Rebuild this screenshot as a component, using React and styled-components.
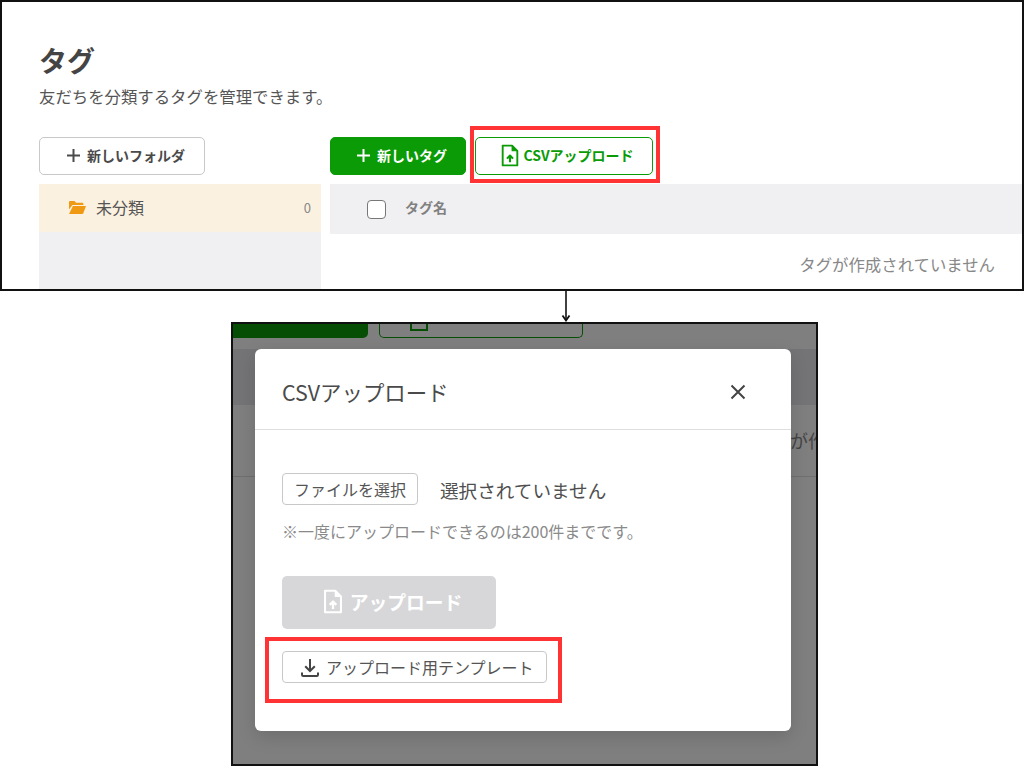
import React from 'react'
import styled, { createGlobalStyle } from 'styled-components'

const GlobalStyle = createGlobalStyle`
  html, body {
    margin: 0;
    padding: 0;
    background: #fff;
  }
  body {
    font-family: "Noto Sans CJK JP", "Noto Sans", sans-serif;
    color: #4a4a4a;
  }
  * {
    box-sizing: border-box;
  }
`

const Page = styled.div`
  width: 1024px;
  height: 768px;
  overflow: hidden;
  display: flex;
  flex-direction: column;
  align-items: flex-start;
`

const TopShot = styled.section`
  position: relative;
  width: 1024px;
  height: 291px;
  flex: none;
  border: 2px solid #111;
  overflow: hidden;
  padding: 40px 0 0 37px;
`

const Title = styled.h1`
  margin: 0;
  font-size: 28px;
  line-height: 36px;
  font-weight: 700;
  color: #444;
`

const Lead = styled.p`
  margin: 6px 0 0;
  font-size: 16.4px;
  line-height: 24px;
  color: #555;
`

const Columns = styled.div`
  margin-top: 29px;
  display: grid;
  grid-template-columns: 282px 692px;
  column-gap: 9px;
`

const Side = styled.div`
  display: flex;
  flex-direction: column;
  gap: 9px;
`

const Main = styled.div`
  display: flex;
  flex-direction: column;
  gap: 9px;
`

const Actions = styled.div`
  display: flex;
  gap: 9px;
`

const Button = styled.button`
  height: 38px;
  width: ${p => p.$w}px;
  padding: 0 0 2px 7px;
  display: flex;
  align-items: center;
  justify-content: center;
  gap: ${p => p.$gap || 6}px;
  border-radius: 5px;
  border: 1px solid ${p => (p.$variant === 'plain' ? '#c8c8c8' : '#0a9b06')};
  background: ${p => (p.$variant === 'solid' ? '#0a9b06' : '#fff')};
  color: ${p => (p.$variant === 'solid' ? '#fff' : p.$variant === 'plain' ? '#4a4a4a' : '#0a9b06')};
  font-family: inherit;
  font-size: 14px;
  font-weight: 700;
`

const FolderList = styled.div`
  height: 106px;
  background: #f0f0f2;
`

const FolderRow = styled.div`
  height: 48px;
  background: #fbf1e0;
  display: flex;
  align-items: center;
  padding: 0 10px 2px 30px;
  font-size: 16px;
  color: #555;
`

const FolderName = styled.span`
  margin-left: 10px;
  flex: 1;
`

const Count = styled.span`
  font-size: 13px;
  color: #888;
`

const TableHead = styled.div`
  height: 50px;
  background: #f0f0f2;
  display: flex;
  align-items: center;
  padding-left: 37px;
  gap: 19px;
  font-size: 14px;
  font-weight: 700;
  color: #808080;
`

const Check = styled.span`
  width: 19px;
  height: 19px;
  border: 1px solid #777;
  border-radius: 4px;
  background: #fff;
`

const HeadLabel = styled.span`
  margin-bottom: 5px;
`

const Empty = styled.div`
  height: 60px;
  padding: 9px 27px 0 0;
  text-align: right;
  font-size: 16.4px;
  line-height: 24px;
  color: #888;
`

const Highlight = styled.div`
  position: absolute;
  border: 4px solid #ff3334;
  left: ${p => p.$x}px;
  top: ${p => p.$y}px;
  width: ${p => p.$w}px;
  height: ${p => p.$h}px;
`

const Connector = styled.div`
  flex: none;
  width: 12px;
  height: 31px;
  margin-left: 560px;
  display: flex;
  justify-content: center;
`

const BottomShot = styled.section`
  position: relative;
  flex: none;
  width: 587px;
  height: 444px;
  margin-left: 231px;
  border: 2px solid #111;
  overflow: hidden;
  background: #7f7f7f;
`

const BackTop = styled.div`
  display: flex;
  gap: 11px;
  height: 14px;
`

const BackSolid = styled.div`
  width: 135px;
  background: #054e03;
  border-radius: 0 0 5px 0;
`

const BackOutline = styled.div`
  width: 204px;
  border: 1px solid #054e03;
  border-top: 0;
  border-radius: 0 0 5px 5px;
  padding-left: 30px;
`

const BackIcon = styled.div`
  width: 18px;
  height: 7px;
  border: 2px solid #054e03;
  border-top: 0;
`

const BackHeader = styled.div`
  margin-top: 11px;
  height: 56px;
  background: #747476;
`

const BackEmpty = styled.div`
  height: 72px;
  border-bottom: 1px solid #6f6f6f;
  padding: 22px 0 0 557px;
  font-size: 18px;
  line-height: 26px;
  color: #444;
  white-space: nowrap;
`

const Modal = styled.div`
  position: absolute;
  left: 22px;
  top: 25px;
  width: 536px;
  height: 382px;
  background: #fff;
  border-radius: 6px;
  box-shadow: 0 6px 18px rgba(0, 0, 0, 0.14);
`

const ModalHead = styled.div`
  height: 81px;
  padding: 4px 45px 0 27px;
  display: flex;
  align-items: center;
  justify-content: space-between;
  border-bottom: 1px solid #dedede;
  font-size: 21.4px;
  color: #4a4a4a;
`

const CloseButton = styled.span`
  display: flex;
  margin-top: 1px;
`

const ModalBody = styled.div`
  padding: 43px 27px 0;
  display: flex;
  flex-direction: column;
  align-items: flex-start;
`

const FileRow = styled.div`
  display: flex;
  align-items: center;
  gap: 22px;
`

const SmallButton = styled.button`
  height: 32px;
  width: ${p => p.$w}px;
  padding: 0;
  display: flex;
  align-items: center;
  justify-content: center;
  gap: 9px;
  border: 1px solid #c8c8c8;
  border-radius: 4px;
  background: #fff;
  font-family: inherit;
  font-size: 16px;
  color: #555;
`

const TemplateButton = styled(SmallButton)`
  justify-content: flex-start;
  padding-left: 18px;
  gap: 7px;
`

const FileState = styled.span`
  font-size: 18.6px;
  color: #4f4f4f;
`

const Note = styled.p`
  margin: 14px 0 0;
  font-size: 16px;
  line-height: 24px;
  color: #8a8a8a;
`

const UploadButton = styled.button`
  margin: 33px 0 22px;
  width: 214px;
  height: 53px;
  padding: 0 0 2px 7px;
  display: flex;
  align-items: center;
  justify-content: center;
  gap: 7px;
  border: 0;
  border-radius: 5px;
  background: #d7d7d9;
  color: #fff;
  font-family: inherit;
  font-size: 18.8px;
  font-weight: 700;
`

const PlusIcon = ({ size = 15 }) => (
  <svg width={size} height={size} viewBox="0 0 15 15" fill="none" stroke="currentColor" strokeWidth="2">
    <path d="M7.5 1v13M1 7.5h13" />
  </svg>
)

const FileUpIcon = ({ width = 18, height = 23 }) => (
  <svg width={width} height={height} viewBox="0 0 17 22" fill="none" stroke="currentColor" strokeWidth="1.8" strokeLinejoin="round">
    <path d="M1.5 1.5h9l5 5v14h-14z" />
    <path d="M10.5 1.5v5h5" fill="currentColor" strokeWidth="1" />
    <path d="M8.5 17.5v-6M5.6 14l2.9-3 2.9 3" strokeWidth="2" />
  </svg>
)

const FolderIcon = () => (
  <svg width="17" height="13" viewBox="0 0 17 13" fill="#f09a14">
    <path d="M0 1.2C0 .5.5 0 1.2 0h4.3l1.6 1.8h6.2c.6 0 1.1.5 1.1 1.1V4H3.4L0 8.5z" />
    <path d="M3.9 5H17l-2.7 7.2c-.2.5-.6.8-1.1.8H0z" />
  </svg>
)

const DownloadIcon = () => (
  <svg width="18" height="19" viewBox="0 0 18 19" fill="none" stroke="#444" strokeWidth="2">
    <path d="M9 1v11.5M4.2 8.2 9 13l4.8-4.8" />
    <path d="M1 14.5v2.2c0 .7.5 1.2 1.2 1.2h13.6c.7 0 1.2-.5 1.2-1.2v-2.2" />
  </svg>
)

const CloseIcon = () => (
  <svg width="16" height="16" viewBox="0 0 16 16" fill="none" stroke="#444" strokeWidth="2">
    <path d="M1.5 1.5l13 13M14.5 1.5l-13 13" />
  </svg>
)

const ArrowDown = () => (
  <svg width="12" height="31" viewBox="0 0 12 31" fill="none" stroke="#111" strokeWidth="1.6">
    <path d="M6 0v29" />
    <path d="M2.5 24.5 6 29.5l3.5-5" strokeWidth="1.8" />
  </svg>
)

export default function App() {
  return (
    <Page>
      <GlobalStyle />
      <TopShot>
        <Title>タグ</Title>
        <Lead>友だちを分類するタグを管理できます。</Lead>
        <Columns>
          <Side>
            <Button $variant="plain" $w={166}>
              <PlusIcon /> 新しいフォルダ
            </Button>
            <FolderList>
              <FolderRow>
                <FolderIcon />
                <FolderName>未分類</FolderName>
                <Count>0</Count>
              </FolderRow>
            </FolderList>
          </Side>
          <Main>
            <Actions>
              <Button $variant="solid" $w={136}>
                <PlusIcon /> 新しいタグ
              </Button>
              <Button $variant="outline" $w={178} $gap={4}>
                <FileUpIcon /> CSVアップロード
              </Button>
            </Actions>
            <TableHead>
              <Check />
              <HeadLabel>タグ名</HeadLabel>
            </TableHead>
            <Empty>タグが作成されていません</Empty>
          </Main>
        </Columns>
        <Highlight $x={468} $y={124} $w={190} $h={57} />
      </TopShot>

      <Connector>
        <ArrowDown />
      </Connector>

      <BottomShot>
        <BackTop>
          <BackSolid />
          <BackOutline>
            <BackIcon />
          </BackOutline>
        </BackTop>
        <BackHeader />
        <BackEmpty>が作</BackEmpty>
        <Modal>
          <ModalHead>
            CSVアップロード
            <CloseButton>
              <CloseIcon />
            </CloseButton>
          </ModalHead>
          <ModalBody>
            <FileRow>
              <SmallButton $w={136}>ファイルを選択</SmallButton>
              <FileState>選択されていません</FileState>
            </FileRow>
            <Note>※一度にアップロードできるのは200件までです。</Note>
            <UploadButton>
              <FileUpIcon width={20} height={25} /> アップロード
            </UploadButton>
            <TemplateButton $w={265}>
              <DownloadIcon /> アップロード用テンプレート
            </TemplateButton>
          </ModalBody>
        </Modal>
        <Highlight $x={32} $y={313} $w={297} $h={66} />
      </BottomShot>
    </Page>
  )
}
